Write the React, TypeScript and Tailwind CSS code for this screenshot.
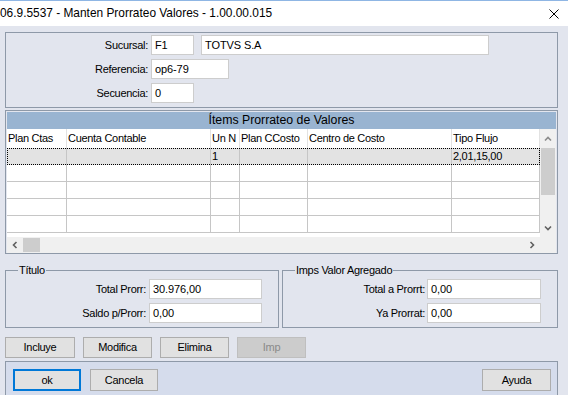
const cols = [60, 144, 29, 68, 144, 88]
const header = ['Plan Ctas', 'Cuenta Contable', 'Un N', 'Plan CCosto', 'Centro de Costo', 'Tipo Flujo']
const first = ['', '', '1', '', '', '2,01,15,00']

function Chevron({ dir, color = '#606060' }: { dir: 'up' | 'down' | 'left' | 'right'; color?: string }) {
    const pts = {
        up: '1,5.5 4,2.5 7,5.5',
        down: '1,2.5 4,5.5 7,2.5',
        left: '5.5,1 2.5,4 5.5,7',
        right: '2.5,1 5.5,4 2.5,7',
    }[dir]
    return (
        <svg width="8" height="8" viewBox="0 0 8 8">
            <polyline points={pts} fill="none" stroke={color} strokeWidth="1.6" />
        </svg>
    )
}

function Field({ w, value }: { w: string; value: string }) {
    return (
        <div className={`${w} h-[20px] bg-white border border-[#cdcdcd] flex items-center pl-[3px] leading-none tracking-[-0.1px]`}>
            {value}
        </div>
    )
}

function Btn({ label, w = 'w-[69px]', disabled = false }: { label: string; w?: string; disabled?: boolean }) {
    return (
        <div
            className={`${w} h-[21px] flex items-center justify-center border ${
                disabled ? 'bg-[#cccccc] border-[#bfbfbf] text-[#8a8a8a]' : 'bg-[#e1e1e1] border-[#adadad]'
            }`}
        >
            {label}
        </div>
    )
}

export default function App() {
    return (
        <div className="w-[568px] h-[395px] overflow-hidden bg-[#e2e5ee] text-black text-[11px] tracking-[-0.3px] font-['Liberation_Sans',sans-serif]">
            {/* title bar */}
            <div className="h-[26px] bg-white border-t border-[#8fb6e4] flex items-center justify-between pr-[9px]">
                <span className="text-[11.9px] tracking-normal pl-0">06.9.5537 - Manten Prorrateo Valores - 1.00.00.015</span>
                <svg width="10" height="10" viewBox="0 0 10 10">
                    <path d="M0.5 0.5 L9.5 9.5 M9.5 0.5 L0.5 9.5" stroke="#000" strokeWidth="1" />
                </svg>
            </div>

            {/* header panel */}
            <div className="ml-[5px] mt-[6px] w-[553px] border border-[#8e99a8] pt-[2px] pb-[4px] flex flex-col gap-[4px]">
                <div className="flex items-center">
                    <span className="w-[142px] text-right">Sucursal:</span>
                    <div className="ml-[3px] flex gap-[7px]">
                        <Field w="w-[43px]" value="F1" />
                        <Field w="w-[288px]" value="TOTVS S.A" />
                    </div>
                </div>
                <div className="flex items-center">
                    <span className="w-[142px] text-right">Referencia:</span>
                    <div className="ml-[3px]">
                        <Field w="w-[78px]" value="op6-79" />
                    </div>
                </div>
                <div className="flex items-center">
                    <span className="w-[142px] text-right">Secuencia:</span>
                    <div className="ml-[3px]">
                        <Field w="w-[43px]" value="0" />
                    </div>
                </div>
            </div>

            {/* grid panel */}
            <div className="ml-[5px] mt-[2px] w-[553px] border border-[#8e99a8] pt-px px-px">
                <div className="h-[17px] bg-[#99b4d1] flex items-center justify-center text-[12.3px] tracking-normal leading-none">
                    Ítems Prorrateo de Valores
                </div>
                <div className="flex h-[108px] bg-white">
                    <div className="w-[533px] flex flex-col">
                        <div className="flex h-[19px]">
                            {header.map((h, i) => (
                                <div key={i} style={{ width: cols[i] }} className="border-r border-[#e2e2e2] pl-[1px] flex items-center whitespace-nowrap overflow-hidden">
                                    {h}
                                </div>
                            ))}
                        </div>
                        <div className="flex h-[17px] bg-[#e3e3e3] outline-1 outline-dotted outline-black -outline-offset-1">
                            {first.map((c, i) => (
                                <div key={i} style={{ width: cols[i] }} className="border-r border-[#c6c6c6] pl-[1px] flex items-center">
                                    {c}
                                </div>
                            ))}
                        </div>
                        {[0, 1, 2, 3].map((r) => (
                            <div key={r} className="flex h-[17px] border-b border-[#c6c6c6]">
                                {cols.map((w, i) => (
                                    <div key={i} style={{ width: w }} className="border-r border-[#c6c6c6]" />
                                ))}
                            </div>
                        ))}
                    </div>
                    <div className="w-[16px] bg-[#f0f0f0] flex flex-col">
                        <div className="h-[19px] flex items-center justify-center">
                            <Chevron dir="up" color="#8a8a8a" />
                        </div>
                        <div className="mx-px h-[47px] bg-[#cdcdcd]" />
                        <div className="flex-1" />
                        <div className="h-[17px] flex items-center justify-center mb-[1px]">
                            <Chevron dir="down" />
                        </div>
                    </div>
                </div>
                <div className="h-[16px] bg-[#f0f0f0] flex items-center">
                    <div className="w-[16px] flex justify-center">
                        <Chevron dir="left" />
                    </div>
                    <div className="w-[17px] h-[14px] bg-[#cdcdcd]" />
                    <div className="flex-1" />
                    <div className="w-[16px] flex justify-center">
                        <Chevron dir="right" />
                    </div>
                    <div className="w-[16px]" />
                </div>
            </div>

            {/* totals */}
            <div className="ml-[5px] mt-[9px] flex gap-[3px]">
                <fieldset className="w-[274px] border border-[#8e99a8] pt-[2px] pb-[4px] flex flex-col gap-[4px]">
                    <legend className="ml-[12px] px-[1px] leading-[14px]">Título</legend>
                    <div className="flex items-center">
                        <span className="w-[140px] text-right">Total Prorr:</span>
                        <div className="ml-[3px]">
                            <Field w="w-[113px]" value="30.976,00" />
                        </div>
                    </div>
                    <div className="flex items-center">
                        <span className="w-[140px] text-right">Saldo p/Prorr:</span>
                        <div className="ml-[3px]">
                            <Field w="w-[113px]" value="0,00" />
                        </div>
                    </div>
                </fieldset>
                <fieldset className="w-[276px] border border-[#8e99a8] pt-[2px] pb-[4px] flex flex-col gap-[4px]">
                    <legend className="ml-[12px] px-[1px] leading-[14px]">Imps Valor Agregado</legend>
                    <div className="flex items-center">
                        <span className="w-[142px] text-right">Total a Prorrt:</span>
                        <div className="ml-[2px]">
                            <Field w="w-[114px]" value="0,00" />
                        </div>
                    </div>
                    <div className="flex items-center">
                        <span className="w-[142px] text-right">Ya Prorrat:</span>
                        <div className="ml-[2px]">
                            <Field w="w-[114px]" value="0,00" />
                        </div>
                    </div>
                </fieldset>
            </div>

            {/* actions */}
            <div className="ml-[5px] mt-[9px] flex gap-[8px]">
                <Btn label="Incluye" w="w-[70px]" />
                <Btn label="Modifica" />
                <Btn label="Elimina" />
                <Btn label="Imp" disabled />
            </div>

            {/* footer */}
            <div className="ml-[5px] mt-[3px] w-[553px] h-[40px] bg-[#d5dcec] border-t border-l border-r border-[#8e99a8] pt-[7px] pl-[7px] pr-[6px] flex items-start">
                <div className="w-[68px] h-[22px] flex items-center justify-center bg-[#e1e1e1] border-2 border-[#0078d7]">ok</div>
                <div className="ml-[9px] w-[68px] h-[22px] flex items-center justify-center bg-[#e1e1e1] border border-[#adadad]">
                    Cancela
                </div>
                <div className="flex-1" />
                <div className="w-[69px] h-[22px] flex items-center justify-center bg-[#e1e1e1] border border-[#adadad]">Ayuda</div>
            </div>
        </div>
    )
}
